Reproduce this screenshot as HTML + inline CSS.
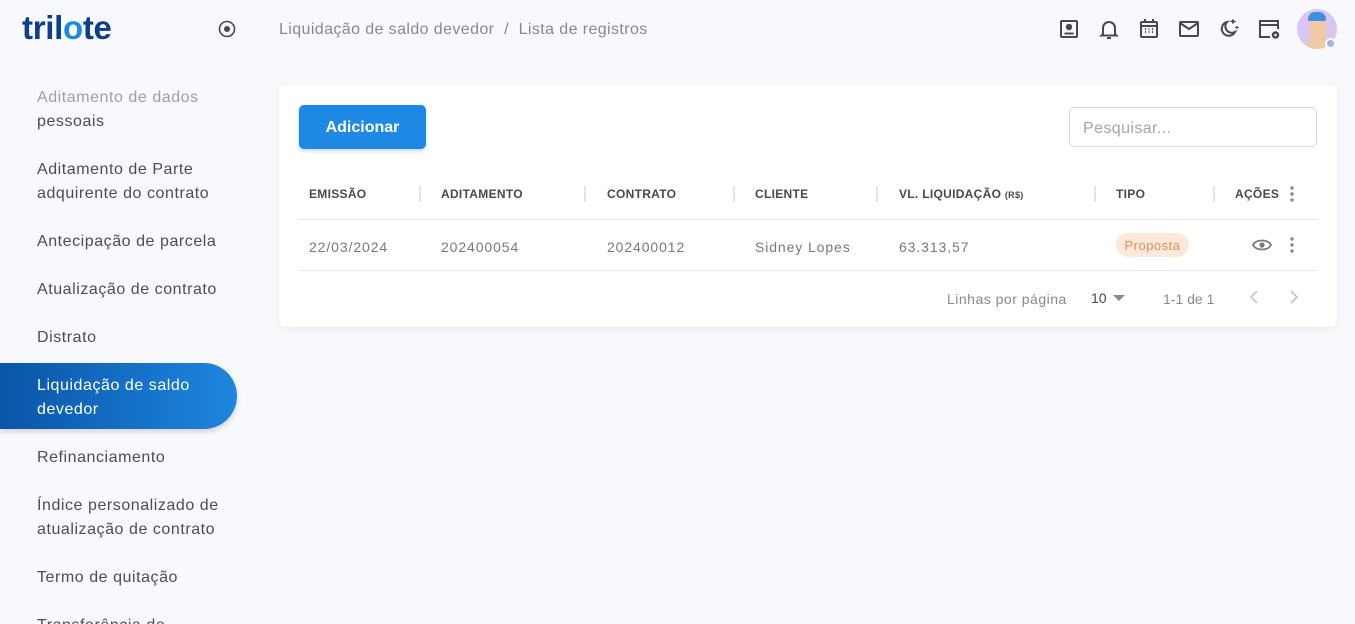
<!DOCTYPE html>
<html><head><meta charset="utf-8"><style>
*{box-sizing:border-box;margin:0;padding:0}
html,body{width:1355px;height:624px;overflow:hidden}
body{background:#f7f9fd;font-family:"Liberation Sans",sans-serif;color:#4b4b55;position:relative}
.abs{position:absolute}
.side{font-size:16px;line-height:24px;color:#4e4b59;letter-spacing:0.55px}
.hd{font-size:12px;font-weight:bold;color:#4a4653;top:187px;letter-spacing:0.3px}
.sep{width:2px;height:16px;background:#e4e4e8;top:186px}
.cell{font-size:14px;color:#7a7780;top:239px;letter-spacing:0.9px}
svg{position:absolute}
</style></head><body>
<div class="abs" style="left:22px;top:9px;font-size:33px;font-weight:bold;color:#0b3f8c;letter-spacing:-0.3px">tril<span style="color:#1e88e5">o</span>te</div>
<svg style="left:218px;top:20px" width="18" height="18" viewBox="0 0 18 18"><circle cx="9" cy="9" r="7.5" fill="none" stroke="#4a4653" stroke-width="1.6"/><circle cx="9" cy="9" r="3" fill="#4a4653"/></svg>
<div class="abs" style="left:279px;top:21px;font-size:16px;color:#8a8792;letter-spacing:0.4px">Liquidação de saldo devedor &nbsp;/&nbsp; Lista de registros</div>
<svg style="left:1059px;top:19px" width="20" height="20" viewBox="0 0 20 20" fill="none" stroke="#4a4653" stroke-width="2"><rect x="2" y="2" width="16" height="16" rx="1"/><circle cx="10" cy="8" r="2.2" fill="#4a4653"/><path d="M5.5 14.5h9"/></svg>
<svg style="left:1099px;top:18px" width="20" height="22" viewBox="0 0 20 22" fill="none" stroke="#4a4653" stroke-width="2"><path d="M4 16V10a6 6 0 0 1 12 0v6l1.5 1.5h-15z"/><path d="M8 20h4"/></svg>
<svg style="left:1139px;top:18px" width="20" height="21" viewBox="0 0 20 21" fill="none" stroke="#4a4653" stroke-width="2"><rect x="2" y="4" width="16" height="15" rx="1"/><path d="M6 1v4M14 1v4M2 8h16"/><path d="M6 11h1M9.5 11h1M13 11h1M6 14h1M9.5 14h1M13 14h1" stroke-width="2"/></svg>
<svg style="left:1178px;top:20px" width="22" height="18" viewBox="0 0 22 18" fill="none" stroke="#4a4653" stroke-width="2"><rect x="2" y="2" width="18" height="14" rx="1"/><path d="M2 3l9 6 9-6"/></svg>
<svg style="left:1218px;top:17px" width="22" height="22" viewBox="0 0 22 22" fill="none" stroke="#4a4653" stroke-width="2"><path d="M9 5a7 7 0 1 0 8 10 6.5 6.5 0 0 1-8-10z"/><path d="M15 2l1 2 2 .5-2 .5-1 2-1-2-2-.5 2-.5z" fill="#4a4653" stroke-width="0.5"/><path d="M19 9l.7 1.3 1.3.2-1.3.3-.7 1.2-.7-1.2-1.3-.3 1.3-.2z" fill="#4a4653" stroke-width="0.5"/></svg>
<svg style="left:1258px;top:19px" width="24" height="22" viewBox="0 0 24 22" fill="none" stroke="#4a4653" stroke-width="2"><path d="M12 18H2V2h18v8"/><path d="M2 6h18"/><circle cx="17.5" cy="16" r="2.5" stroke-width="2.5"/></svg>
<div class="abs" style="left:1297px;top:9px;width:40px;height:40px;border-radius:50%;background:#d9c6f2;overflow:hidden"><div class="abs" style="left:13px;top:6px;width:16px;height:26px;border-radius:7px;background:#f1c9a5"></div><div class="abs" style="left:11px;top:3px;width:18px;height:9px;border-radius:8px 8px 2px 2px;background:#3f8fe0"></div><div class="abs" style="left:10px;top:30px;width:22px;height:12px;border-radius:6px;background:#f1c9a5"></div></div>
<div class="abs" style="left:1325px;top:38px;width:11px;height:11px;border-radius:50%;background:#a8b0e0;border:2px solid #f7f9fd"></div>

<div class="abs side" style="left:37px;top:86px;color:#a09da8">Aditamento de dados</div>
<div class="abs side" style="left:37px;top:110px">pessoais</div>
<div class="abs side" style="left:37px;top:158px">Aditamento de Parte<br>adquirente do contrato</div>
<div class="abs side" style="left:37px;top:230px">Antecipação de parcela</div>
<div class="abs side" style="left:37px;top:278px">Atualização de contrato</div>
<div class="abs side" style="left:37px;top:326px">Distrato</div>
<div class="abs" style="left:0;top:363px;width:237px;height:66px;border-radius:0 33px 33px 0;background:linear-gradient(90deg,#0a55a8,#1e86de);box-shadow:0 3px 6px rgba(0,0,0,.15)"></div>
<div class="abs side" style="left:37px;top:374px;color:#fff">Liquidação de saldo<br>devedor</div>
<div class="abs side" style="left:37px;top:446px">Refinanciamento</div>
<div class="abs side" style="left:37px;top:494px">Índice personalizado de<br>atualização de contrato</div>
<div class="abs side" style="left:37px;top:566px">Termo de quitação</div>
<div class="abs side" style="left:37px;top:614px">Transferência de</div>

<div class="abs" style="left:279px;top:85px;width:1058px;height:242px;background:#fff;border-radius:6px;box-shadow:0 2px 6px rgba(40,40,80,.08)"></div>
<div class="abs" style="left:299px;top:105px;width:127px;height:44px;background:#1e88e5;border-radius:5px;color:#fff;font-weight:bold;font-size:16px;line-height:46px;text-align:center;box-shadow:0 2px 4px rgba(30,136,229,.3)">Adicionar</div>
<div class="abs" style="left:1069px;top:107px;width:248px;height:40px;border:1px solid #d6d6dc;border-radius:5px;font-size:16px;color:#a4a2ab;padding:12px 13px 0;letter-spacing:0.4px">Pesquisar...</div>

<div class="abs hd" style="left:309px">EMISSÃO</div>
<div class="abs sep" style="left:419px"></div>
<div class="abs hd" style="left:441px">ADITAMENTO</div>
<div class="abs sep" style="left:584px"></div>
<div class="abs hd" style="left:607px">CONTRATO</div>
<div class="abs sep" style="left:733px"></div>
<div class="abs hd" style="left:755px">CLIENTE</div>
<div class="abs sep" style="left:876px"></div>
<div class="abs hd" style="left:899px">VL. LIQUIDAÇÃO <span style="font-size:9px">(R$)</span></div>
<div class="abs sep" style="left:1094px"></div>
<div class="abs hd" style="left:1116px">TIPO</div>
<div class="abs sep" style="left:1213px"></div>
<div class="abs hd" style="left:1235px">AÇÕES</div>
<svg style="left:1289px;top:186px" width="6" height="16"><circle cx="3" cy="2" r="1.7" fill="#8a8792"/><circle cx="3" cy="8" r="1.7" fill="#8a8792"/><circle cx="3" cy="14" r="1.7" fill="#8a8792"/></svg>
<div class="abs" style="left:299px;top:219px;width:1018px;height:1px;background:#e8e8ec"></div>

<div class="abs cell" style="left:309px">22/03/2024</div>
<div class="abs cell" style="left:441px">202400054</div>
<div class="abs cell" style="left:607px">202400012</div>
<div class="abs cell" style="left:755px">Sidney Lopes</div>
<div class="abs cell" style="left:899px">63.313,57</div>
<div class="abs" style="left:1116px;top:233px;width:73px;height:24px;border-radius:12px;background:#fde9dc;color:#e0914f;font-size:13px;line-height:25px;text-align:center;letter-spacing:0.5px">Proposta</div>
<svg style="left:1252px;top:238px" width="20" height="14" viewBox="0 0 20 14"><path d="M1 7C4 1 16 1 19 7C16 13 4 13 1 7z" fill="none" stroke="#7a7780" stroke-width="1.8"/><circle cx="10" cy="7" r="2.6" fill="#7a7780"/></svg>
<svg style="left:1289px;top:237px" width="6" height="16"><circle cx="3" cy="2" r="1.7" fill="#8a8792"/><circle cx="3" cy="8" r="1.7" fill="#8a8792"/><circle cx="3" cy="14" r="1.7" fill="#8a8792"/></svg>
<div class="abs" style="left:299px;top:270px;width:1018px;height:1px;background:#e8e8ec"></div>

<div class="abs" style="left:947px;top:291px;font-size:14px;color:#8a8792;letter-spacing:0.5px">Linhas por página</div>
<div class="abs" style="left:1091px;top:290px;font-size:14px;color:#4a4653">10</div>
<svg style="left:1113px;top:295px" width="12" height="6"><path d="M0 0h12L6 6z" fill="#8a8792"/></svg>
<div class="abs" style="left:1163px;top:291px;font-size:14px;color:#8a8792">1-1 de 1</div>
<svg style="left:1250px;top:290px" width="8" height="14"><path d="M7 1L1 7l6 6" fill="none" stroke="#c4c3c9" stroke-width="1.6"/></svg>
<svg style="left:1290px;top:290px" width="8" height="14"><path d="M1 1l6 6-6 6" fill="none" stroke="#c4c3c9" stroke-width="1.6"/></svg>
</body></html>
